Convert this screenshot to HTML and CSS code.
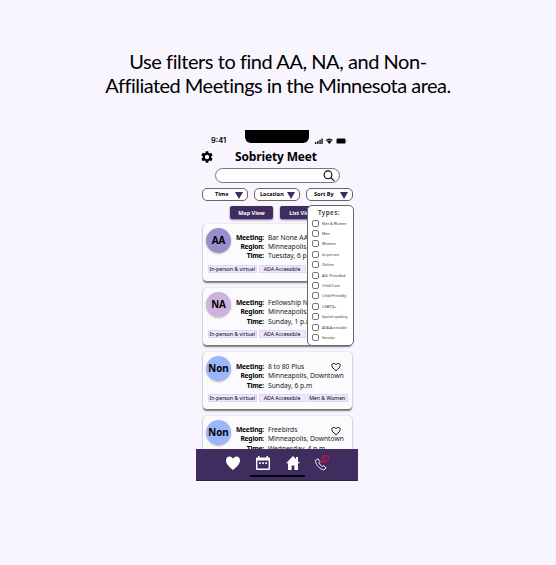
FILE: index.html
```html
<!DOCTYPE html>
<html lang="en">
<head>
<meta charset="utf-8">
<title>Sobriety Meet</title>
<link rel="stylesheet" href="styles.css">
</head>
<body>
<h1 class="headline"><span class="line1">Use filters to find AA, NA, and Non-</span><br><span class="line2">Affiliated Meetings in the Minnesota area.</span></h1>
<main class="phone">
  <div class="status">
    <span class="clock">9:41</span>
    <span class="notch"></span>
    <svg class="signals" viewBox="0 0 32 8">
      <path d="M0 5h1.3v2H0zM2.2 4h1.3v3H2.2zM4.4 2.8h1.3V7H4.4zM6.4 1.5h1.3V7H6.4z"/>
      <path d="M10.8 3.1Q14.3.1 17.8 3.1L14.3 7z"/><path d="M11.6 4.1q2.7-2 5.4 0" fill="none" stroke="#f8f5ff" stroke-width=".6"/>
      <rect x="21.5" y="1.6" width="9" height="5" rx="1.2"/><path d="M31 3.2v1.7" stroke="#777" stroke-width=".6"/>
    </svg>
  </div>
  <header class="title-row">
    <svg class="gear" viewBox="0 0 24 24"><path fill-rule="evenodd" d="M19.1 13a7 7 0 0 0 0-2l2.500-1.900-2.400-4.200-2.900 1.200a7 7 0 0 0-1.700-1L14.200 2H9.800l-.4 3.100a7 7 0 0 0-1.700 1L4.800 4.900 2.400 9.100 4.900 11a7 7 0 0 0 0 2l-2.500 1.900 2.400 4.200 2.900-1.200a7 7 0 0 0 1.700 1l.4 3.100h4.400l.4-3.100a7 7 0 0 0 1.700-1l2.900 1.200 2.400-4.200zM12 8.200a3.800 3.800 0 1 1 0 7.600 3.800 3.800 0 0 1 0-7.600z"/></svg>
    <span class="brand">Sobriety Meet</span>
  </header>
  <div class="search"><svg viewBox="0 0 12 12"><circle cx="5" cy="4.800" r="3.900"/><path d="M7.800 7.700l3.500 3.500"/></svg></div>
  <div class="filters">
    <div class="filter"><span>Time</span><i></i></div>
    <div class="filter"><span>Location</span><i></i></div>
    <div class="filter sort"><span>Sort By</span><i></i></div>
  </div>
  <div class="views"><span>Map View</span><span class="list">List View</span></div>
  <section class="cards">
    <article class="card first">
      <div class="info"><b class="badge aa">AA</b>
        <dl><dt>Meeting:</dt><dd>Bar None AA</dd><dt>Region:</dt><dd>Minneapolis,</dd><dt>Time:</dt><dd>Tuesday, 6 p.m</dd></dl></div>
      <div class="tags"><span>In-person &amp; virtual</span><span>ADA Accessible</span></div>
    </article>
    <article class="card">
      <div class="info"><b class="badge na">NA</b>
        <dl><dt>Meeting:</dt><dd>Fellowship NA</dd><dt>Region:</dt><dd>Minneapolis,</dd><dt>Time:</dt><dd>Sunday, 1 p.m</dd></dl></div>
      <div class="tags"><span>In-person &amp; virtual</span><span>ADA Accessible</span></div>
    </article>
    <article class="card">
      <div class="info"><b class="badge non">Non</b>
        <dl><dt>Meeting:</dt><dd>8 to 80 Plus</dd><dt>Region:</dt><dd>Minneapolis, Downtown</dd><dt>Time:</dt><dd>Sunday, 6 p.m</dd></dl></div>
      <div class="tags"><span>In-person &amp; virtual</span><span>ADA Accessible</span><span>Men &amp; Women</span></div>
      <svg class="fav" viewBox="0 0 24 24"><path d="M12 21C6 16 2 12.500 2 8.200 2 2.600 9 1.600 12 6.300 15 1.600 22 2.600 22 8.200 22 12.500 18 16 12 21z"/></svg>
    </article>
    <article class="card">
      <div class="info"><b class="badge non">Non</b>
        <dl class="last"><dt>Meeting:</dt><dd>Freebirds</dd><dt>Region:</dt><dd>Minneapolis, Downtown</dd><dt>Time:</dt><dd>Wednesday, 4 p.m</dd></dl></div>
      <svg class="fav" viewBox="0 0 24 24"><path d="M12 21C6 16 2 12.500 2 8.200 2 2.600 9 1.600 12 6.300 15 1.600 22 2.600 22 8.200 22 12.500 18 16 12 21z"/></svg>
    </article>
  </section>
  <aside class="menu">
    <h2>Types:</h2>
    <label><i></i>Men &amp; Women</label>
    <label><i></i>Men</label>
    <label><i></i>Women</label>
    <label><i></i>In-person</label>
    <label><i></i>Online</label>
    <label><i></i>ASL Provided</label>
    <label><i></i>Child Care</label>
    <label><i></i>Child Friendly</label>
    <label><i></i>LGBTQ+</label>
    <label class="tiny"><i></i>Spanish speaking</label>
    <label><i></i>ADA Accessible</label>
    <label><i></i>Secular</label>
  </aside>
  <nav class="nav">
    <svg viewBox="0 0 16 16"><path d="M8 15C3 11 1 8.500 1 5.300 1 .6 6.200.4 8 3.700 9.800.4 15 .6 15 5.300 15 8.500 13 11 8 15z"/></svg>
    <svg viewBox="0 0 16 16"><path fill-rule="evenodd" d="M3 1h1.500v1.500h7V1H13v1.500h1q1 0 1 1V14q0 1-1 1H2q-1 0-1-1V3.500q0-1 1-1h1zM2.400 5.500v8h11.200v-8z"/><path d="M4 7.300h1.700v1.700H4zM7.200 7.300h1.700v1.700H7.200zM10.300 7.300h1.700v1.700h-1.700z"/></svg>
    <svg viewBox="0 0 16 16"><path d="M8 1L1 8.300h2V15h3.600v-4.500h2.800V15H13V8.300h2l-2-2V2h-2v2.100z"/></svg>
    <svg viewBox="0 0 16 16"><path class="call" d="M1.600 5.300C.7 8.500 6 15 10 14.800L12.200 13 9.600 10.700 8.200 11.600Q5.800 10.200 4.900 7.700L6 6.500 4 3.800z"/><path class="alert" d="M8.500 7.400l.5-1.900A3.200 3.200 0 1 1 11 6.700zM11.500 2v1.800M11.500 4.600v.8"/></svg>
    <span class="home-bar"></span>
  </nav>
</main>
</body>
</html>
```
FILE: styles.css
```css
* { box-sizing: border-box; }
body { margin: 0; height: 565px; overflow: hidden; background: #f8f5ff; color: #000; font-family: "Noto Sans", sans-serif; }
svg { display: block; overflow: visible; }
.headline { margin: 0; padding-top: 49px; height: 130px; text-align: center; font: 400 20px/24px Lato, sans-serif; white-space: nowrap; }
.line1 { letter-spacing: -.45px; }
.line2 { letter-spacing: -.52px; }
.phone { position: relative; width: 162px; height: 351px; margin-left: 196px; overflow: hidden; }
.status { display: flex; height: 18px; }
.clock { width: 49px; padding-left: 15px; font: 600 7.500px/22px Inter, sans-serif; }
.notch { width: 64px; height: 13px; background: #000; border-radius: 0 0 6px 6px; }
.signals { width: 32px; height: 8px; margin: 7px 0 0 6px; }
.title-row { display: flex; height: 20px; }
.gear { width: 14px; height: 14px; margin: 2px 0 0 4px; }
.brand { margin-left: 21px; font: 700 12px/17px "Open Sans", sans-serif; letter-spacing: -.15px; white-space: nowrap; }
.search { width: 125px; height: 15px; margin-left: 19px; padding: 1px 4px 0 107px; background: #fff; border: 1px solid #777; border-radius: 8px; }
.search svg { width: 12px; height: 12px; fill: none; stroke: #000; stroke-width: 1.100; }
.filters { display: flex; gap: 6px; margin: 5px 0 0 6px; }
.filter { display: flex; align-items: center; justify-content: space-between; width: 46px; height: 13px; padding: 0 4px 0 12px; background: #fff; border: 1px solid #666; border-radius: 5px; font: 700 5.500px/11px "Open Sans", sans-serif; white-space: nowrap; }
.filter:nth-child(2) { padding-left: 5px; }
.filter.sort { width: 47px; padding-left: 7px; }
.filter i { margin-top: 2px; border: 4px solid transparent; border-top: 7px solid #3f2d60; border-bottom: 0; }
.views { display: flex; gap: 7px; margin: 5px 0 0 34px; }
.views span { width: 43px; height: 13px; background: #3f2d60; color: #fff; border-radius: 2px; box-shadow: 0 1px 2px #776b91; text-align: center; font: 700 5.500px/14px "Open Sans", sans-serif; }
.cards { margin: 5px 0 0 7px; width: 149px; display: grid; gap: 7px; }
.card { position: relative; height: 57px; background: #fbfafc; border-radius: 4px; box-shadow: 0 1.500px 1.500px #777, 0 0 1.500px #ccc; }
.info { display: flex; height: 42px; padding: 4.400px 0 0 3px; }
.first .info { height: 41px; }
.badge { width: 25px; height: 25px; border-radius: 50%; text-align: center; font: 700 9.800px/25px "Noto Sans", sans-serif; box-shadow: 0 1px 2px #bbb; }
.aa { background: #998dca; }
.na { background: #ccb2dc; }
.non { background: #9db5fa; }
dl { display: grid; grid-template-columns: 33px 1fr; grid-auto-rows: 9.500px; column-gap: 4px; margin: 5.400px 0 0; font-size: 6.700px; line-height: 9.500px; white-space: nowrap; }
.first dl { margin-top: 5px; grid-auto-rows: 9px; line-height: 9px; }
dl.last { margin-top: 4.500px; }
dt { text-align: right; font-weight: 700; letter-spacing: -.2px; }
dd { margin: 0; color: #222; }
.tags { display: flex; gap: 1.500px; padding-left: 4.500px; }
.tags span { width: 49.500px; height: 8px; background: #eee5ff; border: 1px solid #e2d6f5; font: 5.200px/6px "Noto Sans", sans-serif; white-space: nowrap; display: flex; justify-content: center; }
.tags span:nth-child(2) { width: 47px; }
.tags span:nth-child(3) { width: 40.500px; }
.fav { position: absolute; right: 11px; top: 10px; width: 10px; height: 10px; fill: none; stroke: #000; stroke-width: 2.300; }
.menu { position: absolute; left: 111px; top: 75px; width: 47px; height: 141px; padding: 3px 0 0 4px; background: #fff; border: 1px solid #666; border-radius: 5px; }
.menu h2 { margin: 0 0 2px 6px; font: 600 6.300px/7px "Noto Sans", sans-serif; letter-spacing: .4px; color: #333; }
.menu label { display: flex; align-items: center; height: 10.400px; gap: 3px; font-size: 3.800px; color: #333; white-space: nowrap; }
.menu label:first-of-type { font-size: 3.500px; }
.menu label:nth-last-of-type(2) { font-size: 3.500px; }
.menu label.tiny { font-size: 3.100px; }
.menu label i { flex: none; width: 7px; height: 7px; border: 1px solid #777; border-radius: 2px; }
.nav { position: absolute; left: 0; right: 0; bottom: 0; height: 32px; display: flex; gap: 14px; padding: 6px 0 0 28.500px; background: #3f2d60; border-bottom: 1px solid #30214a; }
.nav svg { width: 16px; height: 16px; fill: #fff; }
.nav svg:nth-child(4) { margin-left: -1px; }
.nav .call { fill: none; stroke: #fff; stroke-width: .9; }
.nav .alert { fill: none; stroke: #c51630; stroke-width: 1.200; }
.home-bar { position: absolute; left: 54px; bottom: 3px; width: 55px; height: 2px; background: #000; border-radius: 1px; }
```
